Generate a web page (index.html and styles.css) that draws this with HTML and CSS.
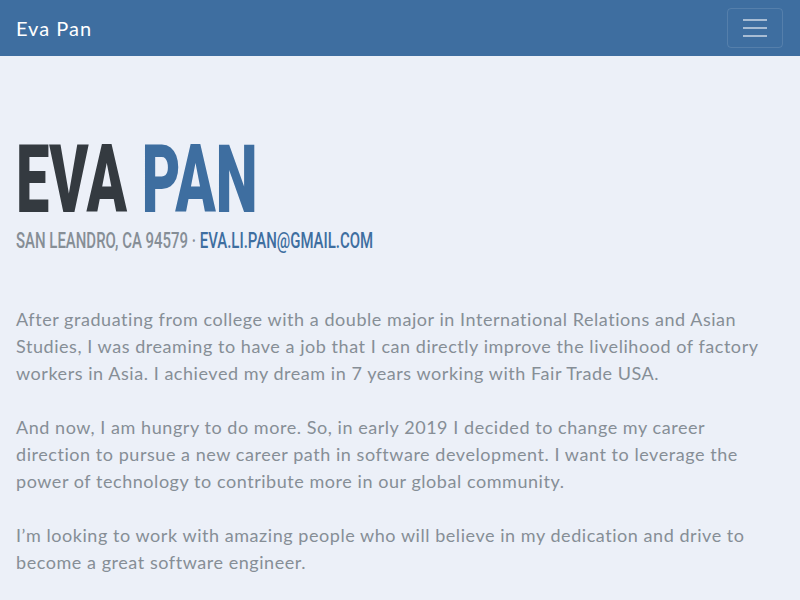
FILE: index.html
```html
<!DOCTYPE html>
<html lang="en">
<head>
<meta charset="utf-8">
<title>Eva Pan</title>
<link rel="stylesheet" href="styles.css">
</head>
<body>
<nav class="navbar">
  <a class="brand" href="#">Eva Pan</a>
  <button class="toggler" aria-label="Toggle navigation">
    <span class="bar"></span><span class="bar"></span><span class="bar"></span>
  </button>
</nav>
<section class="about">
  <h1 class="name"><span class="squeeze">EVA <span class="accent">PAN</span></span></h1>
  <div class="subheading"><span class="squeeze-sm">SAN LEANDRO, CA 94579 · <a class="accent" href="#">EVA.LI.PAN@GMAIL.COM</a></span></div>
  <p class="lead">After graduating from college with a double major in International Relations and Asian Studies, I was dreaming to have a job that I can directly improve the livelihood of factory workers in Asia. I achieved my dream in 7 years working with Fair Trade USA.</p>
  <p class="lead">And now, I am hungry to do more. So, in early 2019 I decided to change my career direction to pursue a new career path in software development. I want to leverage the power of technology to contribute more in our global community.</p>
  <p class="lead">I’m looking to work with amazing people who will believe in my dedication and drive to become a great software engineer.</p>
</section>
</body>
</html>
```
FILE: styles.css
```css
html, body {
  margin: 0;
  padding: 0;
}
body {
  background: #ecf0f8;
  font-family: Lato, "Open Sans", sans-serif;
  color: #868e96;
  overflow: hidden;
}
.navbar {
  height: 56px;
  background: #3e6ea0;
  display: flex;
  align-items: center;
  justify-content: space-between;
  padding: 0 16px;
  box-sizing: border-box;
}
.brand {
  color: #fff;
  font-size: 20px;
  letter-spacing: 1px;
  text-decoration: none;
  font-family: Lato, sans-serif;
}
.toggler {
  width: 56px;
  height: 40px;
  border: 1px solid rgba(255,255,255,0.12);
  border-radius: 4px;
  background: transparent;
  display: flex;
  flex-direction: column;
  justify-content: center;
  align-items: center;
  gap: 6px;
  padding: 0;
  margin-right: 1px;
}
.bar {
  display: block;
  width: 24px;
  height: 2px;
  background: rgba(255,255,255,0.55);
}
.about {
  padding: 76px 16px 0;
}
.name {
  margin: 0;
  font-family: Roboto, "Liberation Sans", sans-serif;
  font-weight: 900;
  font-size: 95px;
  line-height: 95px;
  color: #343a40;
}
.squeeze {
  display: inline-block;
  transform: scaleX(0.626);
  transform-origin: left center;
  white-space: nowrap;
}
.accent {
  color: #3e6ea0;
  text-decoration: none;
}
.subheading {
  font-family: Roboto, "Liberation Sans", sans-serif;
  font-size: 22px;
  font-weight: 500;
  line-height: 26px;
  color: #868e96;
  margin-top: 1px;
  margin-bottom: 52px;
  white-space: nowrap;
}
.squeeze-sm {
  display: inline-block;
  transform: scaleX(0.68);
  transform-origin: left center;
}
.lead {
  font-size: 18px;
  line-height: 27px;
  letter-spacing: 0.55px;
  margin: 0 0 27px;
}
```
